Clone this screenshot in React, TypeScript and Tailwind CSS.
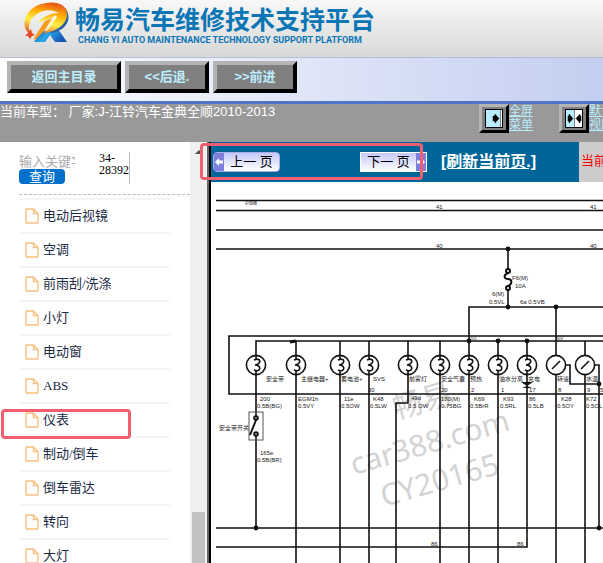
import React, { useState } from "react";

const menuItems = ["电动后视镜", "空调", "前雨刮/洗涤", "小灯", "电动窗", "ABS", "仪表", "制动/倒车", "倒车雷达", "转向", "大灯"];

const lamps = [256, 296, 340, 369, 408, 440, 469, 498, 527];
const meters = [556, 585];
const junctions = [[508, 249], [508, 307], [556, 307], [469, 341], [498, 341], [527, 341], [599, 384], [256, 528], [599, 528]];

const lampNames: [number, string][] = [
  [266, "安全带"],
  [301, "主继电器+"],
  [341, "蓄电池+"],
  [373, "SVS"],
  [409, "前雾灯"],
  [441, "安全气囊"],
  [470, "预热"],
  [499, "油水分离"],
  [528, "充电"],
  [557, "转速"],
  [586, "水温"],
];

const wireTexts: [number, number, string][] = [
  [260, 401, "200"], [257, 408, "0.5B(BG)"],
  [298, 401, "EGM1h"], [298, 408, "0.5VY"],
  [344, 401, "11e"], [341, 408, "0.5OW"],
  [368, 392, "30"], [373, 401, "K48"], [370, 408, "0.5LW"],
  [411, 400, "49d"], [408, 408, "0.5 OW"],
  [441, 392, "20"], [441, 401, "180(M)"], [441, 408, "0.75BG"],
  [471, 392, "2"], [474, 401, "K69"], [470, 408, "0.5BrR"],
  [501, 392, "1"], [503, 401, "K93"], [500, 408, "0.5RL"],
  [529, 392, "17"], [529, 401, "86"], [528, 408, "0.5LB"],
  [558, 392, "8"], [561, 401, "K28"], [557, 408, "0.5OY"],
  [587, 392, "9"], [586, 401, "K72"], [586, 408, "0.5OL"],
  [600, 392, "5"],
  [260, 455, "165e"], [257, 462, "0.5B(BR)"],
  [512, 280, "F6(M)"], [515, 288, "10A"],
  [492, 296, "6(M)"], [489, 304, "0.5VL"], [520, 304, "6a 0.5VB"],
  [436, 209, "41"], [590, 209, "41"], [436, 248, "40"], [590, 248, "40"],
  [431, 546, "86"], [517, 546, "86"],
];

const Logo = () => (
  <svg viewBox="0 0 46 42" className="h-[42px] w-[46px] shrink-0" aria-hidden="true">
    <defs>
      <linearGradient id="fire" x1="0.6" y1="0" x2="0.3" y2="1">
        <stop offset="0" stopColor="#e8581a" />
        <stop offset="0.3" stopColor="#ffae00" />
        <stop offset="0.6" stopColor="#fff04a" />
        <stop offset="1" stopColor="#e2501c" />
      </linearGradient>
      <linearGradient id="leg" x1="0" y1="0" x2="1" y2="0.4">
        <stop offset="0" stopColor="#1a3f9c" />
        <stop offset="0.5" stopColor="#28a8ea" />
        <stop offset="1" stopColor="#1758b4" />
      </linearGradient>
    </defs>
    <path d="M16 31 L25 27 L34 27 L43 40 L31 40 L26 33 L21 40 L10 40 Z" fill="url(#leg)" />
    <path d="M42 7 C48 17 43 28 28 31 L25 30 C38 26 43 17 41 6 Z" fill="#2a62a4" />
    <path d="M8 33 C-4 28 -1 11 12 4 C23 -1 37 -1 42 7 C46 17 38 27 25 30 L20 32 L26 20 L31 14 L14 21 C19 14 27 11 35 11 L30 9 C19 6 9 13 6 20 C4 25 5 30 8 33 Z" fill="url(#fire)" />
    <path d="M21 19 L28 16 L21 28 L11 38 L10 36 Z" fill="#f59a1a" />
    <path d="M7 27 L8 31 L11 33 L8 34 L6 37 L4 34 L1 34 L4 31 Z" fill="#e6491f" />
    <path d="M31 13 L21 29 L24 28 L33 15 Z" fill="#fff7d0" />
  </svg>
);

const FileIcon = () => (
  <svg viewBox="0 0 14 16" className="h-4 w-3.5 shrink-0" fill="none" stroke="#f8bf80" strokeWidth="1.4" aria-hidden="true">
    <path d="M2 1 H8.5 L13 5.5 V14 Q13 15 12 15 H2 Q1 15 1 14 V2 Q1 1 2 1 Z" />
    <path d="M8.5 1 V5.5 H13" />
  </svg>
);

const ToolButton = ({ children, className }: { children: React.ReactNode; className: string }) => (
  <button className={`h-8 border-4 border-t-[#b4b4b4] border-r-black border-b-black border-l-[#b4b4b4] bg-[#808080] text-[13px] leading-4 font-bold text-[#bdeeff] ${className}`}>
    {children}
  </button>
);

const ViewButton = ({ label, lines, split }: { label: string; lines: string[]; split?: boolean }) => (
  <div className="flex">
    <button aria-label={label} className="flex h-[29px] w-[30px] items-center justify-center border-3 border-t-[#b4b4b4] border-r-black border-b-black border-l-[#b4b4b4] bg-[#808080]">
      <svg viewBox="0 0 18 19" className="h-[19px] w-[18px]" aria-hidden="true">
        <rect x="0.5" y="0.5" width="17" height="18" fill="#fff" stroke="#000" />
        <rect x="1" y="1" width={split ? 8 : 14} height="17" fill="#b8ecff" />
        {split ? (
          <path d="M9.5 1 V18 M3 7 H4 V5 L8 9.500 L4 14 V12 H3 Z M16 7 H15 V5 L11 9.500 L15 14 V12 H16 Z" stroke="#000" strokeWidth="0.5" />
        ) : (
          <path d="M15.500 1 V18 M8 7 H10 V5 L14 9.500 L10 14 V12 H8 Z" stroke="#000" strokeWidth="0.5" />
        )}
      </svg>
    </button>
    <a href="#view" className="text-[12px] leading-[14px] whitespace-nowrap text-[#b8ecff] underline">
      {lines[0]}
      <br />
      {lines[1]}
    </a>
  </div>
);

const PageArrow = ({ flip }: { flip?: boolean }) => (
  <span className="flex w-2.5 items-center justify-center self-stretch bg-[#7c80dc]">
    <svg viewBox="0 0 8 8" className="h-2 w-2" aria-hidden="true">
      <path d={flip ? "M8 4 L4 0 V2.500 H0 V5.500 H4 V8 Z" : "M0 4 L4 0 V2.500 H8 V5.500 H4 V8 Z"} fill="#fff" />
    </svg>
  </span>
);

const Diagram = () => (
  <svg viewBox="211 182 392 381" preserveAspectRatio="xMinYMin slice" className="block h-full w-full bg-white" role="img" aria-label="仪表电路图">
    <g transform="rotate(-16 354 475)" fill="#d3d3d3" fontFamily="'Noto Sans', 'Noto Sans CJK SC', sans-serif" fontSize="30">
      <text x="410" y="433">畅易</text>
      <text x="354" y="475">car388.com</text>
      <text x="374" y="514">CY20165</text>
    </g>

    <g stroke="#111" strokeWidth="2" fill="none">
      <path d="M216 200.500 H603 M216 210.500 H603 M216 230 H603 M216 249 H603" strokeWidth="1.6" />
      <path d="M508 249 V269 M508 290 V307 M469 355 V307 H603 M556 307 V355" strokeWidth="1.6" />
      <path d="M603 336 H229 V394 H603" strokeWidth="1.6" />
      <path d="M603 341 H256 V355 M296 341 V355 M340 341 V355 M369 341 V355 M408 341 V355 M440 341 V355 M498 341 V355 M527 341 V355 M585 341 V355" strokeWidth="1.6" />
      <path d="M290 342 L296 341" strokeWidth="3" />
      <path d="M256 375 V416 M256 436 V528 M296 375 V563 M340 375 V563 M369 375 V563 M408 375 V403 H396 V563 M440 375 V563 M469 375 V563 M498 375 V563 M527 375 V547 H216 M556 375 V563 M585 375 V563" strokeWidth="1.6" />
      <path d="M216 528 H603 M566 365 H570 V384 H599 M595 365 H599 V528" strokeWidth="1.6" />
      <circle cx="508" cy="271" r="2" />
      <circle cx="508" cy="288" r="2" />
      <path d="M508 273 C503 275 504 279 508 279 S513 284 508 286" />
      <rect x="249" y="412" width="14" height="28" stroke="#555" strokeWidth="1" />
      <circle cx="256" cy="418" r="1.800" />
      <circle cx="256" cy="434" r="1.800" />
      <path d="M256 420 L250 435" />
      {lamps.map((x) => (
        <g key={x} strokeWidth="1.6">
          <circle cx={x} cy="365" r="9.600" />
          <path d={`M${x} 355 V359 M${x - 2} 360 C${x + 5} 357 ${x + 6} 364 ${x - 1} 365 C${x + 6} 365 ${x + 5} 373 ${x - 2} 370 M${x} 371 V375`} />
        </g>
      ))}
      {meters.map((x) => (
        <g key={x} strokeWidth="1.6">
          <circle cx={x} cy="365" r="9.600" />
          <path d={`M${x - 4} 369 L${x + 4} 361`} />
        </g>
      ))}
    </g>
    <path d="M521 382 H533 L527 386 L532 388 H522 L527 386 Z" fill="#111" />
    {junctions.map(([x, y]) => <circle key={`${x}-${y}`} cx={x} cy={y} r="2.400" fill="#111" />)}

    <g fill="#222" fontFamily="'Liberation Sans', 'Noto Sans CJK SC', sans-serif" fontSize="6">
      {wireTexts.map(([x, y, t]) => <text key={`${x}-${y}`} x={x} y={y}>{t}</text>)}
      <text x="245" y="205" fontSize="4">护围栅</text>
      <text x="470" y="340" fontSize="4">201</text>
      <text x="556" y="340" fontSize="4">30V</text>
      {lampNames.map(([x, t]) => <text key={x} x={x} y="381">{t}</text>)}
      <text x="219" y="430">安全带开关</text>
    </g>
  </svg>
);

export default function App() {
  const [keyword, setKeyword] = useState("");
  return (
    <div className="relative flex h-screen flex-col overflow-hidden bg-white font-['Liberation_Sans','Noto_Sans_CJK_SC',sans-serif]">
      <header className="flex h-[57px] shrink-0 items-start bg-linear-to-b from-[#f8f8f8] to-[#d8d8d8] pt-0.5 pl-6">
        <Logo />
        <div className="pt-1 pl-[5px] whitespace-nowrap text-[#0b76b5]">
          <h1 className="text-[25px] leading-7 font-bold">畅易汽车维修技术支持平台</h1>
          <p className="pl-[3px] font-[Roboto,sans-serif] text-[9px] leading-3 font-bold">CHANG YI AUTO MAINTENANCE TECHNOLOGY SUPPORT PLATFORM</p>
        </div>
      </header>

      <nav className="flex h-[47px] shrink-0 items-start gap-1 border-t border-b-3 border-t-[#b4bcd8] border-b-[#5274c8] bg-linear-to-r from-white to-[#c3cef0] pt-[3px] pl-[7px]">
        <ToolButton className="w-[114px]">返回主目录</ToolButton>
        <ToolButton className="w-[84px]">&lt;&lt;后退.</ToolButton>
        <ToolButton className="w-[84px]">&gt;&gt;前进</ToolButton>
      </nav>

      <div className="flex h-[38px] shrink-0 overflow-hidden bg-[#999]">
        <p className="min-w-0 flex-1 text-[13px] leading-4 whitespace-nowrap text-white">当前车型： 厂家:J-江铃汽车金典全顺2010-2013</p>
        <div className="-mr-2.5 flex shrink-0 gap-[26px]">
          <ViewButton label="全屏" lines={["全屏", "菜单"]} />
          <ViewButton label="默认" lines={["默认", "视图"]} split />
        </div>
      </div>

      <main className="flex min-h-0 flex-1">
        <aside className="w-[190px] shrink-0 overflow-hidden pt-2.5 pl-[19px]">
          <form className="flex h-[43px] items-start border-b border-dashed border-[#bbb]" onSubmit={(e) => e.preventDefault()}>
            <div className="flex w-20 flex-col items-start pt-[3px]">
              <input aria-label="关键字" value={keyword} onChange={(e) => setKeyword(e.target.value)} placeholder="输入关键字" className="h-3.5 w-14 text-[13px] leading-3.5 placeholder:text-[#aaa]" />
              <button className="h-[15px] w-[46px] rounded bg-[#0070cc] text-[13px] leading-3.5 text-white">查询</button>
            </div>
            <p className="h-8 w-[31px] border-r border-[#bbb] font-['Liberation_Serif',serif] text-[12px] leading-3 text-black">
              34-
              <br />
              28392
            </p>
          </form>
          <ul className="mr-5 pt-[3px]">
            {menuItems.map((item) => (
              <li key={item} className="border-t-2 border-[#f5f5f5]">
                <a href="#item" className="flex h-8 items-center gap-1 pl-1.5 font-['Liberation_Serif','Noto_Sans_CJK_SC',serif] text-[13px] text-[#1b2a45]">
                  <FileIcon />
                  {item}
                </a>
              </li>
            ))}
          </ul>
        </aside>

        {/* Frame scrollbar */}
        <div className="flex w-[17px] shrink-0 flex-col items-center bg-[#f0f0f0] pt-2">
          <svg viewBox="0 0 8 4" className="h-1 w-2" aria-hidden="true">
            <path d="M4 0 L8 4 H0 Z" fill="#505050" />
          </svg>
          <div className="flex w-full flex-1 flex-col items-center pt-[358px]">
            <div className="w-[13px] flex-1 bg-[#c1c1c1]" />
          </div>
        </div>

        <section className="flex min-w-0 flex-1 flex-col border-l-2 border-[#666]">
          <div className="flex min-h-0 flex-1 flex-col border-l-2 border-black">
            <div className="flex h-10 shrink-0 bg-[#006699]">
              <div className="flex min-w-0 flex-1 items-center pl-0.5 whitespace-nowrap">
                <button className="flex h-5 w-[67px] shrink-0 items-center rounded-sm border border-[#a8b0ec] bg-linear-to-b from-[#c4c8f8] to-white text-[13px] leading-4 text-black">
                  <PageArrow />
                  <span className="flex-1">上一 页</span>
                </button>
                <button className="ml-20 flex h-5 w-[67px] shrink-0 items-center border border-white bg-linear-to-b from-[#c4c8f8] to-white text-[13px] leading-4 text-black">
                  <span className="flex-1">下一 页</span>
                  <PageArrow flip />
                </button>
                <a href="#refresh" className="ml-3.5 text-[16px] leading-5 font-bold text-white underline">[刷新当前页.]</a>
              </div>
              <p className="w-6 shrink-0 overflow-hidden bg-[#ccc] pl-0.5 text-[13px] leading-[38px] whitespace-nowrap text-[#f00]">当前</p>
            </div>
            <div className="min-h-0 flex-1 overflow-hidden">
              <Diagram />
            </div>
          </div>
        </section>
      </main>

      {/* Marks over the page */}
      <div className="pointer-events-none absolute top-[143px] left-[200px] h-[37px] w-[223px] rounded-sm border-3 border-[#ef5f70]" />
      <div className="pointer-events-none absolute top-[409px] left-px h-[30px] w-[130px] rounded-sm border-3 border-[#ef5f70]" />
    </div>
  );
}
